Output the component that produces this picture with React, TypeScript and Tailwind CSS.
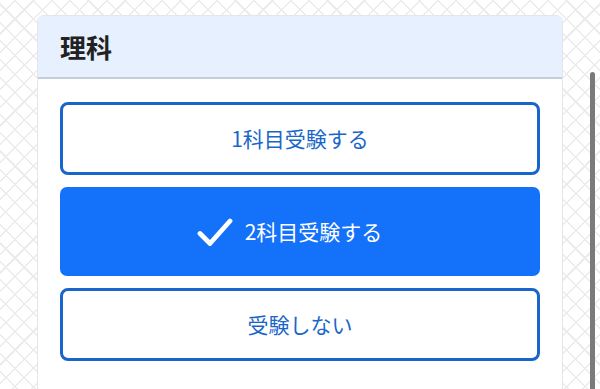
import React from 'react';

const options = [
  { label: '1科目受験する', selected: false },
  { label: '2科目受験する', selected: true },
  { label: '受験しない', selected: false },
];

const CheckIcon = () => (
  <svg width="36" height="30" viewBox="0 0 36 30" fill="none">
    <path d="M3 16.5 L13 26.5 L33 4" stroke="white" strokeWidth="4.8" strokeLinecap="round" strokeLinejoin="round" />
  </svg>
);

export default function App() {
  return (
    <div
      className="relative w-[600px] h-[389px] overflow-hidden bg-white bg-[repeating-linear-gradient(45deg,transparent_0_11.5px,#ececec_11.5px_13px),repeating-linear-gradient(-45deg,transparent_0_11.5px,#ececec_11.5px_13px)] font-['Noto_Sans_CJK_JP','Noto_Sans',sans-serif]"
    >
      <div className="flex px-[37px] pt-[15px]">
        <div className="w-[526px] h-[400px] bg-white rounded-t-[7px] border border-[#e3e6ea] overflow-hidden flex flex-col">
          <div className="h-[63px] bg-[#e7f0fe] border-b-2 border-[#c6ced9] flex items-center px-[22px]">
            <h2 className="text-[26px] font-bold text-[#222] leading-none">理科</h2>
          </div>
          <div className="flex flex-col gap-[12px] px-[22px] pt-[23px]">
            {options.map((o) =>
              o.selected ? (
                <button
                  key={o.label}
                  className="h-[89px] w-full rounded-[7px] bg-[#1471fa] flex items-center justify-center gap-[12px] pr-[21px] text-white text-[21px]"
                >
                  <CheckIcon />
                  <span>{o.label}</span>
                </button>
              ) : (
                <button
                  key={o.label}
                  className="h-[73px] w-full rounded-[8px] border-[3px] border-[#1866cc] bg-white flex items-center justify-center text-[#1a66c8] text-[21px]"
                >
                  {o.label}
                </button>
              )
            )}
          </div>
        </div>
      </div>
      <div className="absolute left-[590px] top-[72px] w-[5px] h-[330px] rounded-full bg-[#7a7a7a]" />
    </div>
  );
}
